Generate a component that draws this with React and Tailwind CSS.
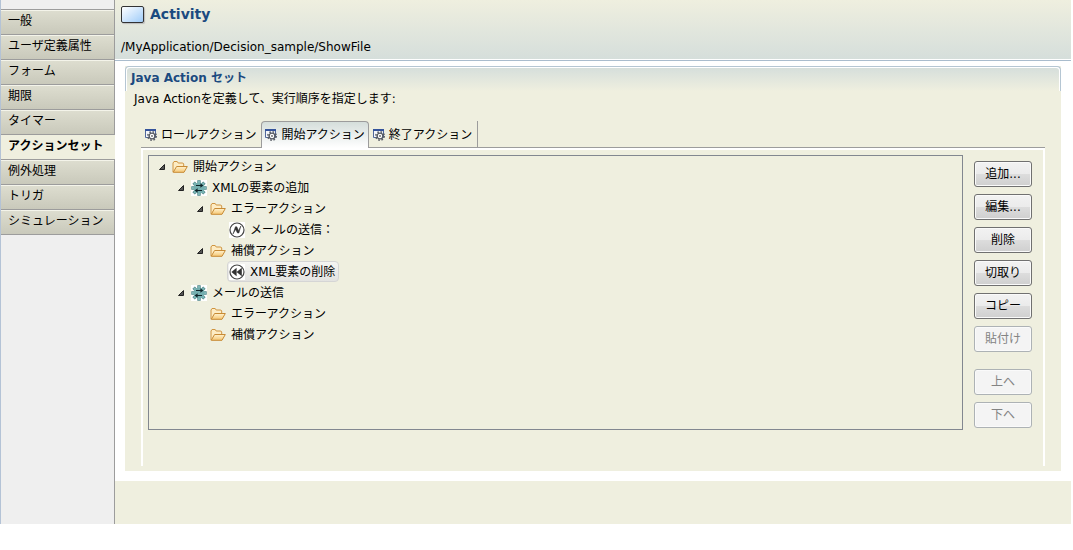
import { useState } from "react";

const sections = [
  "一般",
  "ユーザ定義属性",
  "フォーム",
  "期限",
  "タイマー",
  "アクションセット",
  "例外処理",
  "トリガ",
  "シミュレーション",
];

const tabs = ["ロールアクション", "開始アクション", "終了アクション"];

const tree = [
  {
    icon: "folder",
    label: "開始アクション",
    children: [
      {
        icon: "gear",
        label: "XMLの要素の追加",
        children: [
          {
            icon: "folder",
            label: "エラーアクション",
            children: [{ icon: "error", label: "メールの送信：" }],
          },
          {
            icon: "folder",
            label: "補償アクション",
            children: [{ icon: "rewind", label: "XML要素の削除", selected: true }],
          },
        ],
      },
      {
        icon: "gear",
        label: "メールの送信",
        children: [
          { icon: "folder", label: "エラーアクション" },
          { icon: "folder", label: "補償アクション" },
        ],
      },
    ],
  },
];

const FolderIcon = () => (
  <svg viewBox="0 0 16 16" className="size-4 shrink-0" aria-hidden="true">
    <defs>
      <linearGradient id="folder" x1="0" y1="0" x2="0" y2="1">
        <stop offset="0" stopColor="#fff3cf" />
        <stop offset="1" stopColor="#f6c673" />
      </linearGradient>
    </defs>
    <path
      d="M1 13V4l1-1.5h3.2l1 1.5h4.6l.9 1V7"
      fill="#fdecc4"
      stroke="#cf9440"
    />
    <path
      d="M1.2 13.3 4.6 7.5h10.7L12 13.3z"
      fill="url(#folder)"
      stroke="#c78a35"
      strokeLinejoin="round"
    />
  </svg>
);

const GearIcon = () => (
  <svg viewBox="0 0 16 16" className="size-4 shrink-0 bg-white" aria-hidden="true">
    <g stroke="#4f8587" strokeWidth="3.4">
      <path d="M8 .3v15.4M.3 8h15.4M2.6 2.6l10.8 10.8M13.4 2.6 2.6 13.4" />
    </g>
    <g stroke="#7fb8b8" strokeWidth="2">
      <path d="M8 1v14M1 8h14M3 3l10 10M13 3 3 13" />
    </g>
    <circle cx="8" cy="8" r="5.6" fill="#74aeaf" />
    <path d="M5 5.5h5M11 10.5H6" fill="none" stroke="#0e2428" strokeWidth="1" />
    <path d="M9.4 3.3 12.4 5.5 9.4 7.7zM6.6 8.3 3.6 10.5l3 2.2z" fill="#0e2428" />
  </svg>
);

const ErrorIcon = () => (
  <svg viewBox="0 0 16 16" className="size-4 shrink-0 bg-white" aria-hidden="true">
    <circle cx="8" cy="8" r="7" fill="#fff" stroke="#444" strokeWidth="1.2" />
    <path
      d="M4 12 6.4 4.8h1.4l1.8 4L11.8 4 9.9 11H8.5L6.6 7.4z"
      fill="#333"
      stroke="#333"
      strokeWidth=".5"
    />
  </svg>
);

const RewindIcon = () => (
  <svg viewBox="0 0 16 16" className="size-4 shrink-0 bg-white" aria-hidden="true">
    <circle cx="8" cy="8" r="7" fill="#fff" stroke="#444" strokeWidth="1.2" />
    <path d="M7.6 3.8v8.4L2.4 8zM12.8 3.8v8.4L7.6 8z" fill="#333" />
  </svg>
);

const TabIcon = () => (
  <svg viewBox="0 0 12 12" className="size-3 shrink-0" aria-hidden="true">
    <path d="M.5.5h10v8H.5z" fill="#f4f6fa" stroke="#50689c" />
    <path d="M0 0h11v2H0z" fill="#34539b" />
    <circle cx="7" cy="7" r="4.2" fill="none" stroke="#5b5f68" strokeWidth="1.6" strokeDasharray="1.65 1.65" />
    <circle cx="7" cy="7" r="2.9" fill="#fff" stroke="#555a63" strokeWidth="1.4" />
    <circle cx="7" cy="7" r=".9" fill="#666" />
  </svg>
);

const icons = {
  folder: FolderIcon,
  gear: GearIcon,
  error: ErrorIcon,
  rewind: RewindIcon,
};

const TreeNode = ({ node }) => {
  const Icon = icons[node.icon];

  return (
    <li role="treeitem" aria-selected={!!node.selected}>
      <div className="flex h-[21px] items-center">
        <span className="flex w-[17px] shrink-0 justify-center">
          {node.children && (
            <svg viewBox="0 0 6 6" className="size-1.5" aria-hidden="true">
              <path d="M5.5.5v5h-5z" fill="#555" stroke="#222" />
            </svg>
          )}
        </span>
        <span
          className={
            node.selected
              ? "flex h-[21px] items-center gap-[5px] rounded-sm border border-[#d5d5d5] bg-gradient-to-b from-[#f5f5f2] to-[#e3e3e1] pr-[3px] pl-px"
              : "flex h-[21px] items-center gap-[5px] border border-transparent pr-[3px] pl-px"
          }
        >
          <Icon />
          {node.label}
        </span>
      </div>
      {node.children && (
        <ul role="group" className="pl-[19px]">
          {node.children.map((child) => (
            <TreeNode key={child.label} node={child} />
          ))}
        </ul>
      )}
    </li>
  );
};

const ActionButton = ({ children, disabled }) => (
  <button
    type="button"
    disabled={disabled}
    className="h-[26px] w-full rounded-[3px] border border-[#707070] bg-[linear-gradient(#f2f2f2,#ebebeb_50%,#dddddd_50%,#cfcfcf)] shadow-[inset_0_0_0_1px_#fafafa] disabled:border-[#adb2b5] disabled:bg-[#f4f4f4] disabled:bg-none disabled:text-[#838383]"
  >
    {children}
  </button>
);

export default function App() {
  const [section, setSection] = useState("アクションセット");
  const [tab, setTab] = useState("開始アクション");

  return (
    <div className="min-h-screen bg-white pr-0.5 font-['DejaVu_Sans','Noto_Sans_CJK_JP',sans-serif] text-xs leading-4 text-black">
      <div className="flex h-[524px]">
        {/* menu lateral */}
        <nav className="w-[115px] shrink-0 border-r border-l border-r-[#9c9c9c] border-l-[#b4c3d6] bg-[#efefef] pt-[9px]">
          <ul className="border-b border-[#9c9c9c]">
            {sections.map((name) => (
              <li key={name}>
                <button
                  type="button"
                  onClick={() => setSection(name)}
                  className={
                    name === section
                      ? "block h-[25px] w-[114px] border-t border-[#9c9c9c] bg-[#efefdf] pb-0.5 pl-[7px] text-left font-bold"
                      : "block h-[25px] w-full border-t border-[#9c9c9c] bg-gradient-to-b from-[#deded0] to-[#c9c9bb] pb-0.5 pl-[7px] text-left shadow-[inset_0_1px_0_#f4f4ea]"
                  }
                >
                  {name}
                </button>
              </li>
            ))}
          </ul>
        </nav>

        <div className="flex min-w-0 grow flex-col bg-[#efefdf]">
          <header className="flex h-[61px] flex-col gap-[17px] border-b border-[#a9bccd] bg-gradient-to-b from-[#efefdf] to-[#d5dedb] px-1.5 pt-1.5 shadow-[inset_0_-1px_0_#fff]">
            <div className="flex h-4 items-center gap-1.5">
              <span className="h-[17px] w-[23px] rounded-xs border border-[#333] bg-gradient-to-br from-white to-[#9fccf8] shadow-[1px_1px_1px_#bbb]" />
              <h1 className="text-sm leading-4 font-bold text-[#1b4a80]">Activity</h1>
            </div>
            <p>/MyApplication/Decision_sample/ShowFile</p>
          </header>

          <main className="bg-white px-2.5 pt-[5px] pb-2.5">
            <section className="bg-[#efefdf] px-4 pb-[5px]">
              <h2 className="-mx-4 h-[25px] rounded-t-sm border-x border-t border-[#b5c6d3] bg-gradient-to-b from-[#d5dedb] to-[#efefdf] pt-[3px] pl-[5px] font-bold text-[#1b4a80] shadow-[inset_1px_1px_0_#fff,inset_-1px_1px_0_#fff]">
                Java Action セット
              </h2>
              <p className="-ml-[7px]">Java Actionを定義して、実行順序を指定します:</p>

              <div role="tablist" className="mt-3.5 flex h-[27px] border-b border-[#9c9c9c]">
                {tabs.map((name) => (
                  <button
                    key={name}
                    type="button"
                    role="tab"
                    aria-selected={name === tab}
                    onClick={() => setTab(name)}
                    className={
                      name === tab
                        ? "flex h-[27px] items-center gap-1 rounded-t border border-b-0 border-[#9c9c9c] bg-gradient-to-b from-[#d5dedb] to-white px-[3px]"
                        : "flex h-[26px] items-center gap-1 pt-0.5 pr-[5px] pl-1 last:border-r last:border-[#9c9c9c]"
                    }
                  >
                    <TabIcon />
                    {name}
                  </button>
                ))}
              </div>

              <div className="flex h-[318px] gap-[11px] border-x-2 border-t-2 border-white pt-[5px] pr-[11px] pl-[5px]">
                <ul role="tree" className="h-[275px] grow border border-[#828790] px-1">
                  {tree.map((node) => (
                    <TreeNode key={node.label} node={node} />
                  ))}
                </ul>
                <div className="flex w-[58px] flex-col gap-[7px] pt-1.5">
                  <ActionButton>追加...</ActionButton>
                  <ActionButton>編集...</ActionButton>
                  <ActionButton>削除</ActionButton>
                  <ActionButton>切取り</ActionButton>
                  <ActionButton>コピー</ActionButton>
                  <ActionButton disabled>貼付け</ActionButton>
                  <div className="mt-[3px] flex flex-col gap-[7px] pt-[7px]">
                    <ActionButton disabled>上へ</ActionButton>
                    <ActionButton disabled>下へ</ActionButton>
                  </div>
                </div>
              </div>
            </section>
          </main>
        </div>
      </div>
    </div>
  );
}
